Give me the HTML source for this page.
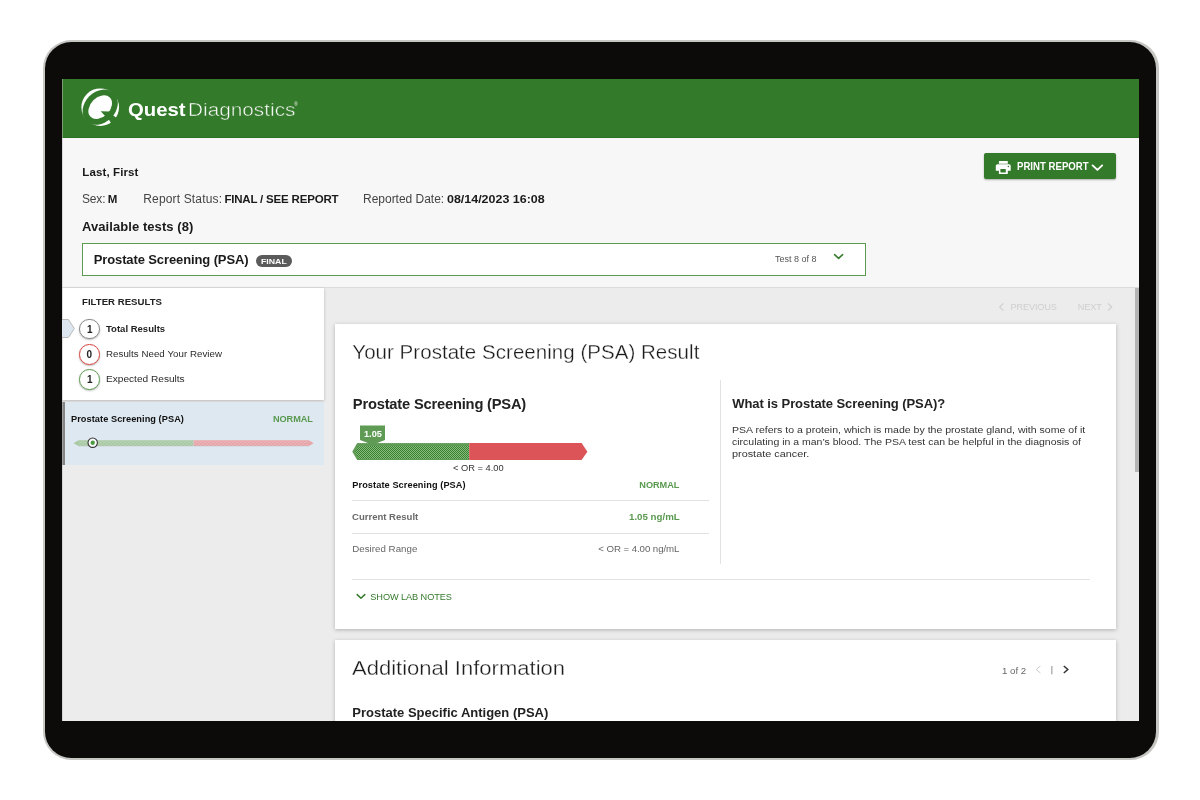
<!DOCTYPE html>
<html lang="en">
<head>
<meta charset="utf-8">
<title>Quest Diagnostics - Prostate Screening (PSA) Result</title>
<style>
*{box-sizing:border-box;margin:0;padding:0}
html,body{width:1200px;height:800px;overflow:hidden;background:#fff}
body{font-family:"Liberation Sans",sans-serif;position:relative}
.abs{position:absolute}
.t{position:absolute;white-space:nowrap;line-height:1;font-family:"Liberation Sans",sans-serif}
.t b{font-weight:700;color:#1a1a1a}
#bezel-edge{left:43px;top:40px;width:1115.6px;height:720.2px;border-radius:28.5px;background:#c6c6c2}
#bezel{left:44.8px;top:41.8px;width:1111.6px;height:716.2px;border-radius:26.5px;background:#0c0b09}
#screen{left:62px;top:79px;width:1077px;height:642px;overflow:hidden;background:#ececec}
#page{left:-62px;top:-79px;width:1200px;height:800px;will-change:transform}
#hdr{left:62px;top:79px;width:1077px;height:58.8px;background:#347a2b;border-bottom:1px solid #2c7023}
#info{left:62px;top:138px;width:1077px;height:149.5px;background:#f7f7f7;border-bottom:1px solid #dcdcdc}
#sel{left:82px;top:243px;width:784px;height:33px;background:#fff;border:1px solid #5d9c50}
#final{left:256.3px;top:255.3px;width:35.4px;height:11.4px;border-radius:6px;background:#5b5b5b}
#btn{left:984px;top:153px;width:132.3px;height:26.4px;border-radius:2px;background:#347a2b;box-shadow:0 1px 2px rgba(0,0,0,.3)}
#side{left:62px;top:287.5px;width:262px;height:112.5px;background:#fff;box-shadow:0 1px 3px rgba(0,0,0,.22)}
#item{left:62px;top:401.8px;width:262px;height:63.4px;background:#dee8f1;border-left:3px solid #858585}
.circ{width:20.6px;height:20.6px;border-radius:50%;background:#fff;border:1px solid #8a8a8a;box-shadow:0 1px 2px rgba(0,0,0,.25)}
.card{background:#fff;box-shadow:0 1px 4px rgba(0,0,0,.25)}
#card1{left:335px;top:324.4px;width:781.3px;height:304.8px}
#card2{left:335px;top:640px;width:781.3px;height:120px}
.hl{height:1px;background:#e2e2e2}
#sb{left:1135px;top:288px;width:4px;height:184px;background:#b4b4b4}
</style>
</head>
<body>
<div class="abs" id="bezel-edge"></div>
<div class="abs" id="bezel"></div>
<div class="abs" id="screen"><div class="abs" id="page">

<div class="abs" id="hdr"></div>
<div class="abs" id="info"></div>
<div class="abs" id="sel"></div>
<div class="abs" id="final"></div>
<div class="abs" id="btn"></div>

<!-- sidebar -->
<div class="abs" id="side"></div>
<div class="abs" id="item"></div>
<div class="abs circ" style="left:79.2px;top:318.9px"></div>
<div class="abs circ" style="left:79.2px;top:344px;border-color:#d9453f"></div>
<div class="abs circ" style="left:79.2px;top:369.4px;border-color:#5d9c50"></div>

<!-- cards -->
<div class="abs card" id="card1"></div>
<div class="abs card" id="card2"></div>
<div class="abs hl" style="left:352px;top:500.4px;width:357.3px"></div>
<div class="abs hl" style="left:352px;top:532.7px;width:357.3px"></div>
<div class="abs hl" style="left:352px;top:578.6px;width:738px"></div>
<div class="abs" style="left:720.2px;top:380px;width:1px;height:184px;background:#e2e2e2"></div>
<div class="abs" id="sb"></div>
<div class="abs" style="left:62px;top:79px;width:1px;height:642px;background:rgba(190,190,190,.5)"></div>

<!-- vector art -->
<svg class="abs" style="left:0;top:0" width="1200" height="800" viewBox="0 0 1200 800">
<defs>
  <pattern id="dotsG" width="2" height="2" patternUnits="userSpaceOnUse"><rect width="2" height="2" fill="#8aba80"/><rect x="0" y="0" width="1" height="1" fill="#37822d"/><rect x="1" y="1" width="1" height="1" fill="#37822d"/></pattern>
  <pattern id="dotsM" width="4" height="3" patternUnits="userSpaceOnUse"><circle cx="1" cy="1.5" r=".55" fill="#fff" fill-opacity=".45"/><circle cx="3" cy="3" r=".55" fill="#fff" fill-opacity=".45"/><circle cx="3" cy="0" r=".55" fill="#fff" fill-opacity=".45"/></pattern>
  <clipPath id="logoClip"><circle cx="100.2" cy="107.2" r="18.9"/></clipPath>
</defs>

<!-- Quest logo mark -->
<g id="logo">
  <circle cx="100.2" cy="107.2" r="18.8" fill="#fff"/>
  <ellipse cx="100.2" cy="107.2" rx="19.6" ry="15.4" transform="rotate(-45 100.2 107.2)" fill="#347a2b"/>
  <ellipse cx="100.2" cy="107.2" rx="13.6" ry="9.7" transform="rotate(-45 100.2 107.2)" fill="#fff"/>
  <path d="M100.7 111.3 L109.3 111.4 L113 115.3 L120 120.4 L113.4 127 L108.5 119.1 L104.4 115.3 Z" fill="#347a2b"/>
</g>

<!-- Print button: printer icon + chevron -->
<g fill="#fff">
  <rect x="998.9" y="161" width="8.9" height="2.7" rx=".3"/>
  <path d="M995.8 170.8 V165.8 A1.6 1.6 0 0 1 997.4 164.2 H1009.1 A1.6 1.6 0 0 1 1010.7 165.8 V170.8 H1007.8 V174 H998.9 V170.8 Z"/>
</g>
<rect x="1000.4" y="169.1" width="5.4" height="3.4" rx=".4" fill="#347a2b"/>
<circle cx="1008.4" cy="166.6" r=".75" fill="#347a2b"/>
<path d="M1092.6 165.4 L1097.4 169.9 L1102.2 165.4" fill="none" stroke="#fff" stroke-width="1.9" stroke-linecap="round" stroke-linejoin="round"/>

<!-- select chevron -->
<path d="M834.6 254.6 L838.6 258.4 L842.6 254.6" fill="none" stroke="#347a2b" stroke-width="1.5" stroke-linecap="round" stroke-linejoin="round"/>

<!-- sidebar arrow marker -->
<path d="M61 319.5 H68.4 L74.4 328.5 L68.4 337.5 H61 Z" fill="#dce6f0" stroke="#b9b9b9" stroke-width="1"/>

<!-- sidebar mini bar -->
<path d="M73.4 443.2 L78.6 440.3 H193.6 V446.1 H78.6 Z" fill="#a9caa4"/>
<path d="M193.6 440.3 H308.8 L313.6 443.2 L308.8 446.1 H193.6 Z" fill="#e7a6a9"/>
<path d="M78.6 440.8 H308.8 V445.8 H78.6 Z" fill="url(#dotsM)"/>
<path d="M78.6 446.1 H308.8" stroke="#b9b9b9" stroke-width=".6" stroke-opacity=".7"/>
<circle cx="92.7" cy="442.7" r="4.7" fill="#fff" stroke="#333" stroke-width="1.1"/>
<circle cx="92.7" cy="442.7" r="2.2" fill="#4f9a45"/>

<!-- previous / next chevrons -->
<path d="M1003.4 303.4 L999.6 307 L1003.4 310.6" fill="none" stroke="#cfcfcf" stroke-width="1.1"/>
<path d="M1108 303.4 L1111.8 307 L1108 310.6" fill="none" stroke="#cfcfcf" stroke-width="1.1"/>

<!-- main result bar -->
<path d="M352.3 451.7 L357.2 443.1 H469.2 V460.1 H357.2 Z" fill="#5f9b55"/>
<path d="M358.6 445.8 H469.2 V458.7 H358.6 L355.4 451.9 Z" fill="url(#dotsG)"/>
<path d="M469.2 443.1 H581.6 L587.4 451.7 L581.6 460.1 H469.2 Z" fill="#dc5457"/>
<path d="M357.2 443.3 H469.2" stroke="#fff" stroke-opacity=".35" stroke-width=".6" stroke-dasharray="1 1"/>
<path d="M360 425.4 H385 V440 L376.6 443.3 L375.4 446 H369.8 L368.6 443.3 L360 440 Z" fill="#5f9b55"/>

<!-- show lab notes chevron -->
<path d="M357.2 594.6 L361 598.2 L364.8 594.6" fill="none" stroke="#347a2b" stroke-width="1.5" stroke-linecap="round" stroke-linejoin="round"/>

<!-- pager -->
<path d="M1040.4 666 L1036.2 669.5 L1040.4 673" fill="none" stroke="#c9c9c9" stroke-width="1"/>
<rect x="1051" y="666" width="1.6" height="8.3" fill="#b8b8b8"/>
<path d="M1063.8 666 L1067.8 669.5 L1063.8 673" fill="none" stroke="#333" stroke-width="1.5"/>

</svg>

<div class="t" style="top:101px;font-size:18.6px;left:128.30px;font-weight:700;color:#fff;transform:scaleX(1.0922);transform-origin:0 50%;">Quest</div>
<div class="t" style="top:101px;font-size:18.6px;left:187.70px;color:#fff;transform:scaleX(1.1179);transform-origin:0 50%;-webkit-text-stroke:0.5px #347a2b;">Diagnostics</div>
<div class="t" style="top:103px;font-size:4.5px;left:294.30px;color:#fff;">&reg;</div>
<div class="t" style="top:167px;font-size:11.5px;left:82.30px;font-weight:700;color:#1a1a1a;letter-spacing:0.118px;">Last, First</div>
<div class="t" style="top:193px;font-size:12px;left:82.00px;color:#444;letter-spacing:-0.172px;">Sex:</div>
<div class="t" style="top:194px;font-size:11.5px;left:107.70px;font-weight:700;color:#1a1a1a;">M</div>
<div class="t" style="top:193px;font-size:12px;left:143.30px;color:#444;letter-spacing:0.152px;">Report Status:</div>
<div class="t" style="top:194px;font-size:11.5px;left:224.40px;font-weight:700;color:#1a1a1a;letter-spacing:-0.189px;">FINAL / SEE REPORT</div>
<div class="t" style="top:193px;font-size:12px;left:363.00px;color:#444;letter-spacing:-0.015px;">Reported Date:</div>
<div class="t" style="top:194px;font-size:11.5px;left:447.00px;font-weight:700;color:#1a1a1a;transform:scaleX(1.0829);transform-origin:0 50%;">08/14/2023 16:08</div>
<div class="t" style="top:220px;font-size:13px;left:82.00px;font-weight:700;color:#1a1a1a;letter-spacing:0.069px;">Available tests (8)</div>
<div class="t" style="top:253px;font-size:13px;left:93.70px;font-weight:700;color:#1a1a1a;letter-spacing:-0.113px;">Prostate Screening (PSA)</div>
<div class="t" style="top:258px;font-size:8px;left:261.00px;font-weight:700;color:#fff;transform:scaleX(1.0950);transform-origin:0 50%;">FINAL</div>
<div class="t" style="top:255px;font-size:9px;left:775.00px;color:#555;letter-spacing:-0.013px;">Test 8 of 8</div>
<div class="t" style="top:162px;font-size:10.2px;left:1017.00px;font-weight:700;color:#fff;transform:scaleX(0.9441);transform-origin:0 50%;">PRINT REPORT</div>
<div class="t" style="top:297px;font-size:9.6px;left:82.00px;font-weight:700;color:#222;letter-spacing:0.028px;">FILTER RESULTS</div>
<div class="t" style="top:325px;font-size:10px;left:87.00px;font-weight:700;color:#222;">1</div>
<div class="t" style="top:350px;font-size:10px;left:86.60px;font-weight:700;color:#222;">0</div>
<div class="t" style="top:375px;font-size:10px;left:87.00px;font-weight:700;color:#222;">1</div>
<div class="t" style="top:325px;font-size:9.2px;left:106.00px;font-weight:700;color:#222;transform:scaleX(1.0369);transform-origin:0 50%;">Total Results</div>
<div class="t" style="top:349px;font-size:9.7px;left:106.00px;color:#2a2a2a;letter-spacing:0.055px;">Results Need Your Review</div>
<div class="t" style="top:374px;font-size:9.7px;left:106.00px;color:#2a2a2a;transform:scaleX(1.0435);transform-origin:0 50%;">Expected Results</div>
<div class="t" style="top:415px;font-size:9.2px;left:71.00px;font-weight:700;color:#111;letter-spacing:0.070px;">Prostate Screening (PSA)</div>
<div class="t" style="top:415px;font-size:9.2px;left:273.00px;font-weight:700;color:#5a9a4f;letter-spacing:-0.082px;">NORMAL</div>
<div class="t" style="top:303px;font-size:9.2px;left:1010.50px;color:#cfcfcf;letter-spacing:-0.152px;">PREVIOUS</div>
<div class="t" style="top:303px;font-size:9.2px;left:1077.70px;color:#cfcfcf;letter-spacing:-0.099px;">NEXT</div>
<div class="t" style="top:342px;font-size:20.5px;left:352.30px;color:#1c1c1c;letter-spacing:0.040px;-webkit-text-stroke:0.3px #fff;">Your Prostate Screening (PSA) Result</div>
<div class="t" style="top:397px;font-size:14.7px;left:352.80px;font-weight:700;color:#222;letter-spacing:-0.194px;">Prostate Screening (PSA)</div>
<div class="t" style="top:430px;font-size:8.6px;left:363.90px;font-weight:700;color:#fff;transform:scaleX(1.0673);transform-origin:0 50%;">1.05</div>
<div class="t" style="top:464px;font-size:9px;left:453.30px;color:#333;transform:scaleX(1.0320);transform-origin:0 50%;">&lt; OR = 4.00</div>
<div class="t" style="top:481px;font-size:9.2px;left:352.30px;font-weight:700;color:#111;letter-spacing:0.087px;">Prostate Screening (PSA)</div>
<div class="t" style="top:481px;font-size:9.2px;left:639.30px;font-weight:700;color:#5a9a4f;letter-spacing:-0.042px;">NORMAL</div>
<div class="t" style="top:513px;font-size:9.2px;left:352.30px;font-weight:700;color:#6a6a6a;transform:scaleX(1.0377);transform-origin:0 50%;">Current Result</div>
<div class="t" style="top:513px;font-size:9.2px;left:628.70px;font-weight:700;color:#5a9a4f;transform:scaleX(1.0567);transform-origin:0 50%;">1.05 ng/mL</div>
<div class="t" style="top:544px;font-size:9.7px;left:352.30px;color:#666;letter-spacing:0.029px;">Desired Range</div>
<div class="t" style="top:544px;font-size:9.7px;left:598.30px;color:#666;letter-spacing:-0.077px;">&lt; OR = 4.00 ng/mL</div>
<div class="t" style="top:593px;font-size:9.2px;left:370.30px;color:#347a2b;letter-spacing:-0.083px;">SHOW LAB NOTES</div>
<div class="t" style="top:397px;font-size:13px;left:732.30px;font-weight:700;color:#222;letter-spacing:-0.074px;">What is Prostate Screening (PSA)?</div>
<div class="t" style="top:425px;font-size:9.7px;left:732.30px;color:#333;transform:scaleX(1.0880);transform-origin:0 50%;">PSA refers to a protein, which is made by the prostate gland, with some of it</div>
<div class="t" style="top:437px;font-size:9.7px;left:732.30px;color:#333;transform:scaleX(1.0830);transform-origin:0 50%;">circulating in a man&rsquo;s blood. The PSA test can be helpful in the diagnosis of</div>
<div class="t" style="top:449px;font-size:9.7px;left:732.30px;color:#333;transform:scaleX(1.1209);transform-origin:0 50%;">prostate cancer.</div>
<div class="t" style="top:658px;font-size:20.5px;left:352.30px;color:#1c1c1c;transform:scaleX(1.0744);transform-origin:0 50%;-webkit-text-stroke:0.3px #fff;">Additional Information</div>
<div class="t" style="top:706px;font-size:13px;left:352.30px;font-weight:700;color:#222;">Prostate Specific Antigen (PSA)</div>
<div class="t" style="top:666px;font-size:9.7px;left:1002.00px;color:#666;letter-spacing:-0.016px;">1 of 2</div>
</div></div>
</body>
</html>
